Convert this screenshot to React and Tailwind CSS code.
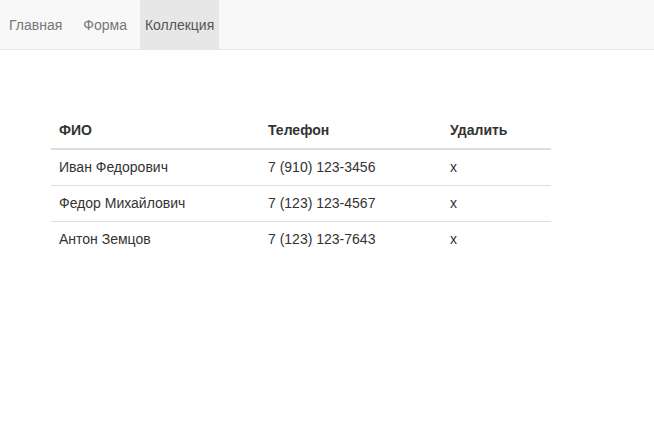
import React from "react";

const rows = [
  ["Иван Федорович", "7 (910) 123-3456"],
  ["Федор Михайлович", "7 (123) 123-4567"],
  ["Антон Земцов", "7 (123) 123-7643"],
];

export default function App() {
  return (
    <div className="min-h-[432px] bg-white font-['Liberation_Sans',Arial,sans-serif] text-[14px] text-[#333]">
      <nav className="flex h-[50px] border-b border-[#e7e7e7] bg-[#f8f8f8] pl-[4px]">
        <a className="flex items-center px-[5px] leading-[20px] text-[#777]">Главная</a>
        <a className="ml-[11px] flex items-center px-[5px] leading-[20px] text-[#777]">Форма</a>
        <a className="ml-[8px] flex items-center bg-[#e7e7e7] px-[5px] pr-[5px] leading-[20px] text-[#555]">Коллекция</a>
      </nav>
      <table className="ml-[51px] mt-[63px] w-[500px] border-collapse">
        <thead>
          <tr>
            <th className="w-[209px] border-b-2 border-[#ddd] px-[8px] py-[8px] text-left font-bold leading-[19px]">ФИО</th>
            <th className="w-[182px] border-b-2 border-[#ddd] px-[8px] py-[8px] text-left font-bold leading-[19px]">Телефон</th>
            <th className="border-b-2 border-[#ddd] px-[8px] py-[8px] text-left font-bold leading-[19px]">Удалить</th>
          </tr>
        </thead>
        <tbody>
          {rows.map((r, i) => (
            <tr key={i} className={i > 0 ? "border-t border-[#ddd]" : ""}>
              <td className="px-[8px] py-[8px] leading-[19px]">{r[0]}</td>
              <td className="px-[8px] py-[8px] leading-[19px]">{r[1]}</td>
              <td className="px-[8px] py-[8px] leading-[19px]">x</td>
            </tr>
          ))}
        </tbody>
      </table>
    </div>
  );
}
